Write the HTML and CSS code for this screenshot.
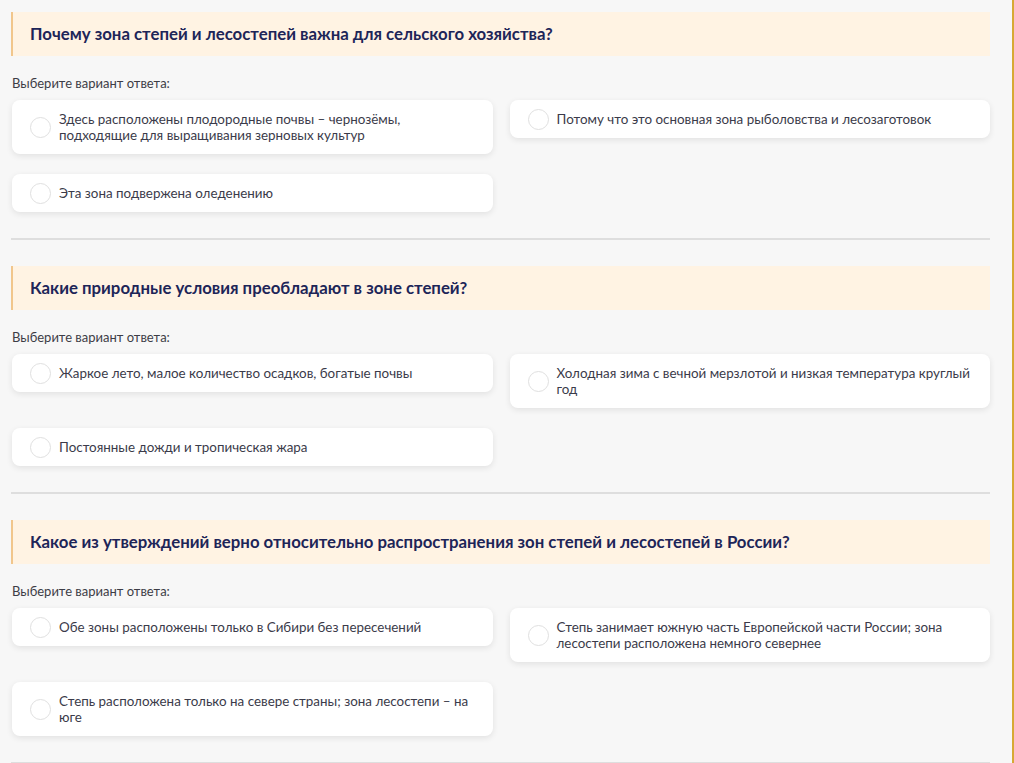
FILE: index.html
```html
<!DOCTYPE html>
<html lang="ru">

<head>
 <meta charset="UTF-8">
 <meta name="viewport" content="width=device-width, initial-scale=1.0">
 <title>Тест: степи и лесостепи</title>
 <link rel="stylesheet" href="styles.css">
</head>

<body>
 <div class="page">

  <section class="question">
   <h2 class="q-title">Почему зона степей и лесостепей важна для сельского хозяйства?</h2>
   <p class="q-hint">Выберите вариант ответа:</p>
   <ul class="answers">
    <li class="answer"><span class="radio"></span><span>Здесь расположены плодородные почвы – чернозёмы, подходящие для выращивания зерновых культур</span></li>
    <li class="answer"><span class="radio"></span><span>Потому что это основная зона рыболовства и лесозаготовок</span></li>
    <li class="answer"><span class="radio"></span><span>Эта зона подвержена оледенению</span></li>
   </ul>
  </section>

  <section class="question">
   <h2 class="q-title">Какие природные условия преобладают в зоне степей?</h2>
   <p class="q-hint">Выберите вариант ответа:</p>
   <ul class="answers">
    <li class="answer"><span class="radio"></span><span>Жаркое лето, малое количество осадков, богатые почвы</span></li>
    <li class="answer"><span class="radio"></span><span>Холодная зима с вечной мерзлотой и низкая температура круглый год</span></li>
    <li class="answer"><span class="radio"></span><span>Постоянные дожди и тропическая жара</span></li>
   </ul>
  </section>

  <section class="question">
   <h2 class="q-title">Какое из утверждений верно относительно распространения зон степей и лесостепей в России?</h2>
   <p class="q-hint">Выберите вариант ответа:</p>
   <ul class="answers">
    <li class="answer"><span class="radio"></span><span>Обе зоны расположены только в Сибири без пересечений</span></li>
    <li class="answer"><span class="radio"></span><span>Степь занимает южную часть Европейской части России; зона лесостепи расположена немного севернее</span></li>
    <li class="answer"><span class="radio"></span><span>Степь расположена только на севере страны; зона лесостепи – на юге</span></li>
   </ul>
  </section>

 </div>
</body>

</html>
```

FILE: styles.css
```css
html {
 background-color: #f7f7f7;
}

body {
 margin: 0;
 font-family: Lato, 'Open Sans', sans-serif;
 color: #3b3b4a;
}

.page {
 min-height: 100vh;
 box-sizing: border-box;
 width: 1014px;
 padding: 12px 22px 0 11px;
 border-right: 2px solid #d7a935;
}

.question {
 border-bottom: 2px solid #dedede;
 padding-bottom: 26px;
 margin-bottom: 26px;
}

.q-title {
 margin: 0;
 background-color: #fff3e3;
 border-left: 2px solid #f1c68c;
 padding: 0 17px;
 height: 44px;
 line-height: 44px;
 font-size: 16.8px;
 font-weight: bold;
 color: #1d2558;
}

.q-hint {
 margin: 18px 0 0 1px;
 font-size: 13px;
 line-height: 18px;
 color: #3d3d46;
}

.answers {
 list-style-type: none;
 margin: 8px 0 0 1px;
 padding: 0;
 display: grid;
 grid-template-columns: 1fr 1fr;
 column-gap: 17px;
 row-gap: 20px;
 align-items: start;
}

.answer {
 display: flex;
 align-items: center;
 gap: 8px;
 background-color: #fff;
 border-radius: 8px;
 box-shadow: 0 2px 6px rgba(0, 0, 0, 0.09);
 padding: 11px 14px 11px 18px;
 font-size: 13.4px;
 line-height: 16px;
}

.radio {
 flex: none;
 width: 19px;
 height: 19px;
 margin: -3px 0;
 border: 1px solid #e0e0e0;
 border-radius: 50%;
 background-color: #fff;
}
```
